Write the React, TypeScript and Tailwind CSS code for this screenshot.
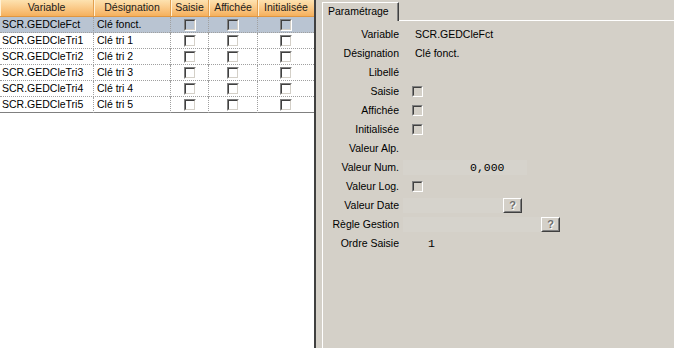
import React from "react";

const rows = [
  { v: "SCR.GEDCleFct", d: "Clé fonct.", sel: true },
  { v: "SCR.GEDCleTri1", d: "Clé tri 1" },
  { v: "SCR.GEDCleTri2", d: "Clé tri 2" },
  { v: "SCR.GEDCleTri3", d: "Clé tri 3" },
  { v: "SCR.GEDCleTri4", d: "Clé tri 4" },
  { v: "SCR.GEDCleTri5", d: "Clé tri 5" },
];

function GridCheck() {
  return (
    <span className="block w-[12px] h-[12px] border border-t-[#808080] border-l-[#808080] border-r-white border-b-white">
      <span className="block w-full h-full border border-t-[#404040] border-l-[#404040] border-r-[#d4d0c8] border-b-[#d4d0c8]" />
    </span>
  );
}

function PanelCheck() {
  return (
    <span className="block w-[11px] h-[11px] border border-t-[#808080] border-l-[#808080] border-r-white border-b-white">
      <span className="block w-full h-full border border-t-[#404040] border-l-[#404040] border-r-[#d4d0c8] border-b-[#d4d0c8]" />
    </span>
  );
}

function HelpButton() {
  return (
    <span className="block w-[19px] h-[15px] border border-t-white border-l-white border-r-[#404040] border-b-[#404040]">
      <span className="flex items-center justify-center w-full h-full border border-t-[#d4d0c8] border-l-[#d4d0c8] border-r-[#808080] border-b-[#808080] text-[11px] font-bold text-[#707070] leading-none [text-shadow:1px_1px_0_#ffffff]">
        ?
      </span>
    </span>
  );
}

const hdrCell =
  "flex items-center justify-center border-r border-r-[#e3a050] shadow-[inset_1px_0_0_#fff1d6]";

export default function App() {
  return (
    <div className="flex w-[674px] h-[348px] overflow-hidden bg-[#d4d0c8] text-[10.5px] text-black font-['Liberation_Sans',Arial,sans-serif]">
      {/* Left grid */}
      <div className="w-[316px] h-full bg-white border-r-2 border-r-[#404040] flex flex-col">
        <div className="grid grid-cols-[94px_77px_38px_49px_56px] h-[17px] bg-gradient-to-b from-[#fde2b0] to-[#f5b05c] border-b border-b-[#e09640] text-[#1a1a1a]">
          <div className={hdrCell}>Variable</div>
          <div className={hdrCell}>Désignation</div>
          <div className={hdrCell}>Saisie</div>
          <div className={hdrCell}>Affichée</div>
          <div className="flex items-center justify-center shadow-[inset_1px_0_0_#fff1d6]">Initialisée</div>
        </div>
        {rows.map((r, i) => (
          <div
            key={r.v}
            className={`grid grid-cols-[94px_77px_38px_49px_56px] h-[16px] border-b ${
              i === rows.length - 1 ? "border-solid border-b-[#808080]" : "border-dotted border-b-[#a0a0a0]"
            } ${r.sel ? "bg-[#b9c4d2]" : ""}`}
          >
            <div className="flex items-center pl-[2px] border-r border-dotted border-r-[#a0a0a0] whitespace-nowrap">{r.v}</div>
            <div className="flex items-center pl-[3px] border-r border-dotted border-r-[#a0a0a0] whitespace-nowrap">{r.d}</div>
            <div className="flex items-center justify-center border-r border-dotted border-r-[#a0a0a0]">
              <GridCheck />
            </div>
            <div className="flex items-center justify-center border-r border-dotted border-r-[#a0a0a0]">
              <GridCheck />
            </div>
            <div className="flex items-center justify-center">
              <GridCheck />
            </div>
          </div>
        ))}
      </div>

      {/* Right panel */}
      <div className="flex-1 flex flex-col pl-[6px] pt-[2px]">
        <div className="flex h-[19px]">
          <div className="w-[77px] h-[19px] border-l border-t border-l-white border-t-white border-r border-r-[#404040] shadow-[inset_-1px_0_0_#808080] pl-[5px] flex items-center">
            Paramétrage
          </div>
          <div className="flex-1 border-b border-b-white" />
        </div>
        <div className="flex-1 border-l border-l-white pt-[4px] flex flex-col">
          <Row label="Variable">
            <span className="ml-[16px]">SCR.GEDCleFct</span>
          </Row>
          <Row label="Désignation">
            <span className="ml-[16px]">Clé fonct.</span>
          </Row>
          <Row label="Libellé" />
          <Row label="Saisie">
            <span className="ml-[13px]">
              <PanelCheck />
            </span>
          </Row>
          <Row label="Affichée">
            <span className="ml-[13px]">
              <PanelCheck />
            </span>
          </Row>
          <Row label="Initialisée">
            <span className="ml-[13px]">
              <PanelCheck />
            </span>
          </Row>
          <Row label="Valeur Alp." />
          <Row label="Valeur Num.">
            <span className="ml-[4px] w-[124px] h-[15px] bg-[#d6d3cc] flex items-center pl-[67px] font-['Liberation_Mono',monospace] text-[11.5px]">
              0,000
            </span>
          </Row>
          <Row label="Valeur Log.">
            <span className="ml-[13px]">
              <PanelCheck />
            </span>
          </Row>
          <Row label="Valeur Date">
            <span className="ml-[4px] w-[100px] h-[15px] bg-[#d6d3cc]" />
            <HelpButton />
          </Row>
          <Row label="Règle Gestion">
            <span className="ml-[4px] w-[138px] h-[15px] bg-[#d6d3cc]" />
            <HelpButton />
          </Row>
          <Row label="Ordre Saisie">
            <span className="ml-[29px] font-['Liberation_Mono',monospace] text-[11.5px]">1</span>
          </Row>
        </div>
      </div>
    </div>
  );
}

function Row({ label, children }: { label: string; children?: React.ReactNode }) {
  return (
    <div className="flex items-center h-[19px]">
      <div className="w-[76px] text-right whitespace-nowrap">{label}</div>
      <div className="flex items-center">{children}</div>
    </div>
  );
}
